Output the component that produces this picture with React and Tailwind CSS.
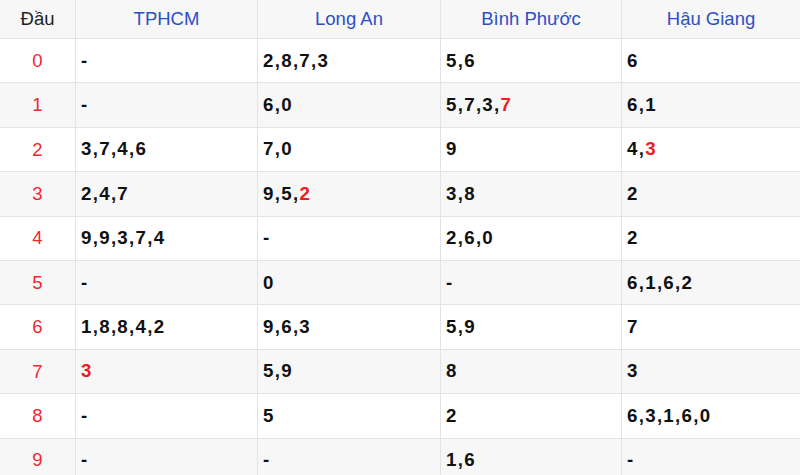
import React from "react";

const rows = [
  ["0", "-", "2,8,7,3", "5,6", "6"],
  ["1", "-", "6,0", "5,7,3,|7", "6,1"],
  ["2", "3,7,4,6", "7,0", "9", "4,|3"],
  ["3", "2,4,7", "9,5,|2", "3,8", "2"],
  ["4", "9,9,3,7,4", "-", "2,6,0", "2"],
  ["5", "-", "0", "-", "6,1,6,2"],
  ["6", "1,8,8,4,2", "9,6,3", "5,9", "7"],
  ["7", "|3", "5,9", "8", "3"],
  ["8", "-", "5", "2", "6,3,1,6,0"],
  ["9", "-", "-", "1,6", "-"],
];

const heads = ["TPHCM", "Long An", "Bình Phước", "Hậu Giang"];
const widths = ["w-[182px]", "w-[183px]", "w-[181px]", "flex-1"];

function Cell({ v }) {
  const i = v.indexOf("|");
  if (i === -1) return <span>{v}</span>;
  return (
    <span>
      {v.slice(0, i)}
      <span className="text-[#ee1b22]">{v.slice(i + 1)}</span>
    </span>
  );
}

export default function App() {
  return (
    <div
      className="w-[800px] h-[475px] overflow-hidden bg-white"
      style={{ fontFamily: '"Liberation Sans", Arial, sans-serif' }}
    >
      <div className="flex h-[39px] bg-[#f7f7f7] border-b border-[#e3e3e3] text-[18.5px]">
        <div className="w-[76px] shrink-0 border-r border-[#e3e3e3] flex items-center justify-center text-[#222]">
          Đầu
        </div>
        {heads.map((h, k) => (
          <div
            key={h}
            className={`${widths[k]} shrink-0 ${k < 3 ? "border-r border-[#e3e3e3]" : ""} flex items-center justify-center text-[#2d4fc6]`}
          >
            {h}
          </div>
        ))}
      </div>
      {rows.map((r, idx) => (
        <div
          key={r[0]}
          className={`flex h-[44.4px] border-b border-[#e3e3e3] ${idx % 2 === 1 ? "bg-[#f7f7f7]" : "bg-white"}`}
        >
          <div className="w-[76px] shrink-0 border-r border-[#e3e3e3] flex items-center justify-center text-[18.5px] text-[#f0282e]">
            {r[0]}
          </div>
          {r.slice(1).map((v, k) => (
            <div
              key={k}
              className={`${widths[k]} shrink-0 ${k < 3 ? "border-r border-[#e3e3e3]" : ""} flex items-center pl-[5px] text-[18.7px] font-bold tracking-[1.3px] text-[#111]`}
            >
              <Cell v={v} />
            </div>
          ))}
        </div>
      ))}
    </div>
  );
}
